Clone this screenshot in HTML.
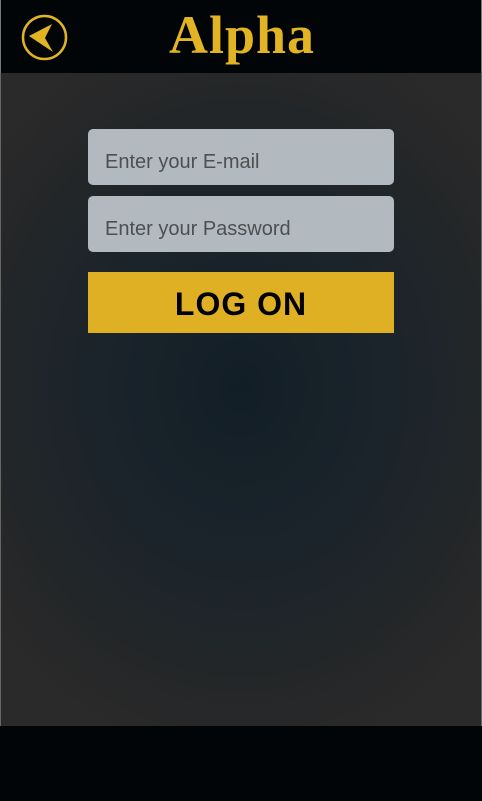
<!DOCTYPE html>
<html><head><style>
html,body{margin:0;padding:0;width:482px;height:801px;overflow:hidden;background:#020507;font-family:"Liberation Sans",sans-serif}
.hdr{position:absolute;left:0;top:0;width:482px;height:73px;background:#020507;border-left:1px solid #777;border-right:1px solid #777;box-sizing:border-box}
.main{position:absolute;left:0;top:73px;width:482px;height:653px;background:radial-gradient(ellipse 330px 380px at 240px 315px,#121e26 0%,#1b242b 45%,#232628 75%,#2b2a2a 100%);border-left:1px solid #666;border-right:1px solid #666;box-sizing:border-box}
.ftr{position:absolute;left:0;top:726px;width:482px;height:75px;background:#020507}
.title{position:absolute;left:0;width:482px;top:5px;text-align:center;font-family:"Liberation Serif",serif;font-weight:bold;font-size:54px;line-height:60px;color:#e2b424;letter-spacing:1px}
.inp{position:absolute;left:87px;width:306px;height:56px;background:#b2b9bf;border-radius:5px;color:#4e4f51;font-size:20px;line-height:56px;padding-left:17px;padding-top:5px;box-sizing:border-box}
.btn{position:absolute;left:87px;top:272px;width:306px;height:61px;background:#e0b024;text-align:center;line-height:64px;font-weight:900;font-size:32px;color:#000;letter-spacing:1px}
</style></head><body>
<div class="hdr">
<svg style="position:absolute;left:20px;top:14px" width="47" height="47" viewBox="0 0 47 47"><circle cx="23.5" cy="23.5" r="21.5" fill="none" stroke="#e2b424" stroke-width="2.5"/><path d="M8 22 L31 10 L24 24 L32 38 Z" fill="#e2b424"/></svg>
<div class="title">Alpha</div>
</div>
<div class="main">
<div class="inp" style="top:56px">Enter your E-mail</div>
<div class="inp" style="top:123px">Enter your Password</div>
<div class="btn" style="top:199px">LOG ON</div>
</div>
<div class="ftr"></div>
</body></html>
